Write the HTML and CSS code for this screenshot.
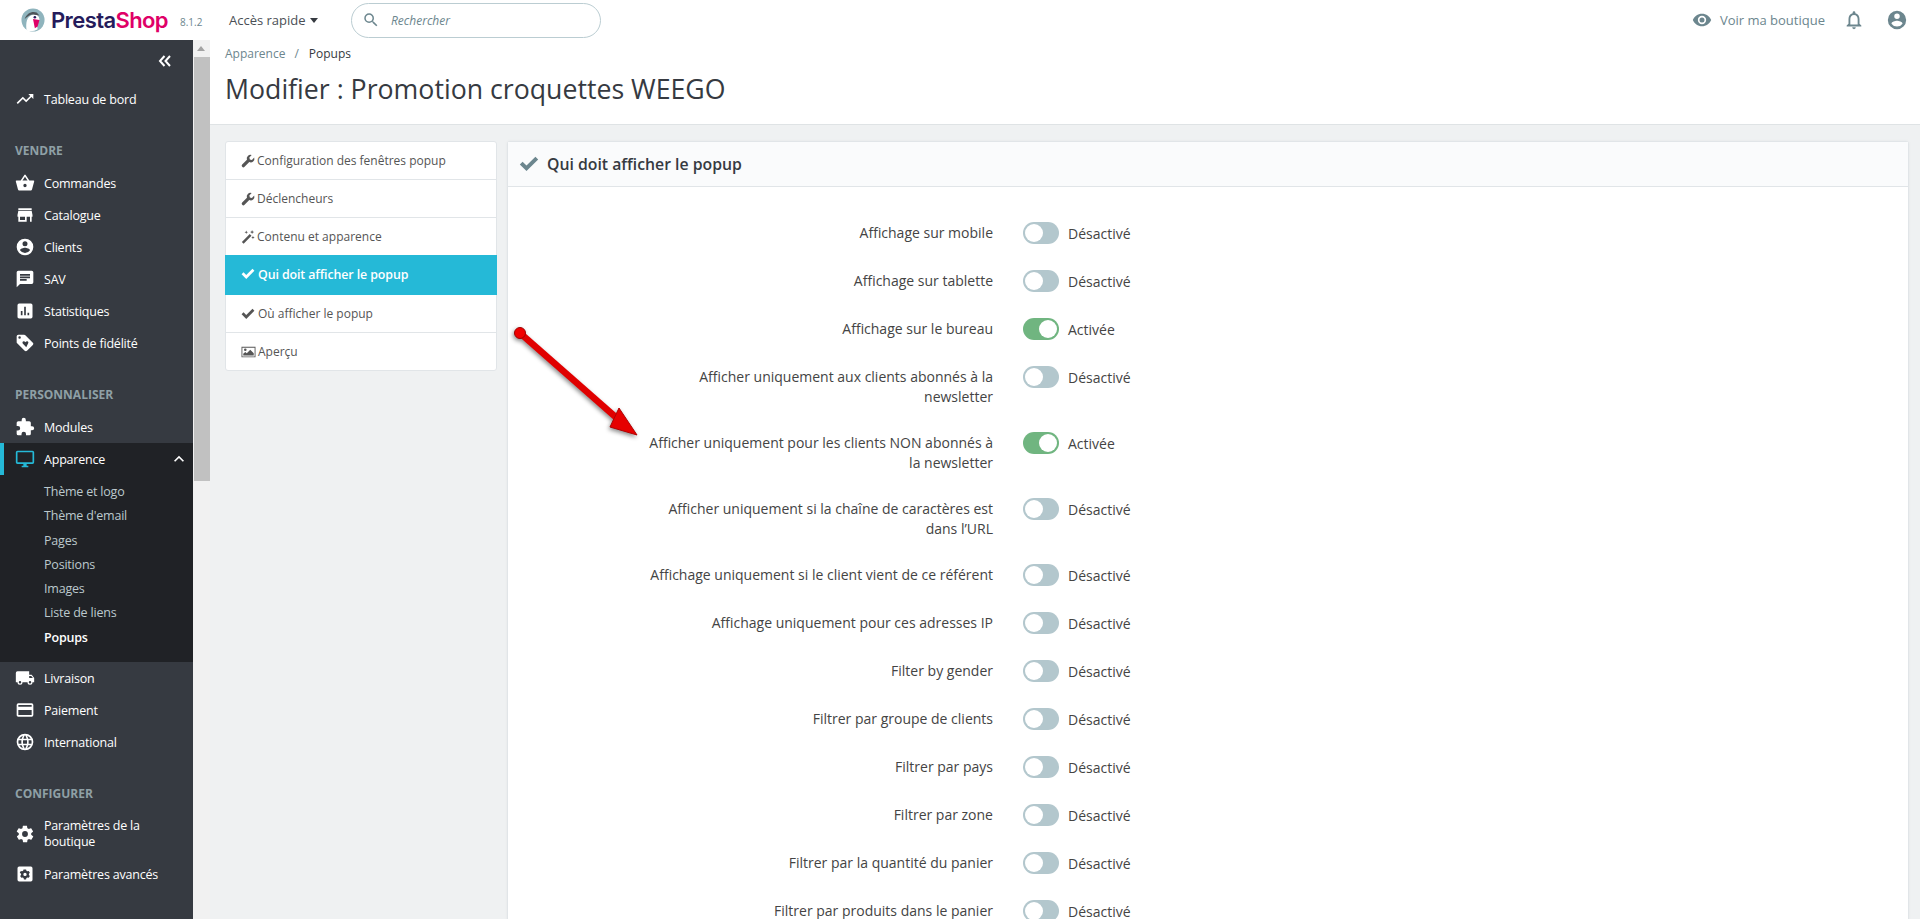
FILE: index.html
```html
<!DOCTYPE html>
<html lang="fr">
<head>
    <meta charset="UTF-8">
    <title>Modifier : Promotion croquettes WEEGO</title>
    <link rel="stylesheet" href="styles.css">
</head>
<body>

    <header class="header">
        <div class="logo">
            <svg class="logo-bird" viewBox="0 0 26 26" width="24" height="24">
                <circle cx="13" cy="13" r="12.500" fill="#8fb4bd"/>
                <path d="M6 24c-1-8 0-15 7-17 5-1 7 3 7 6l-3 3 1 7c-3 2-9 3-12 1z" fill="#fff"/>
                <path d="M4 12c2-6 8-9 13-7l3 3-7-1c-3 0-6 2-9 5z" fill="#4d5459"/>
                <path d="M13 12l7 1-2 7-3 2z" fill="#df0067"/>
                <circle cx="15" cy="10" r="1.400" fill="#251b5b"/>
            </svg>
            <span class="logo-presta">Presta</span><span class="logo-shop">Shop</span>
        </div>
        <span class="version">8.1.2</span>
        <a class="quick" href="#">Accès rapide <i class="caret"></i></a>
        <div class="search">
            <svg viewBox="0 0 24 24" width="18" height="18"><path d="M15.500 14h-.79l-.28-.27A6.470 6.470 0 0 0 16 9.500 6.500 6.500 0 1 0 9.500 16c1.610 0 3.090-.59 4.230-1.570l.27.28v.79l5 4.990L20.490 19l-4.990-5zm-6 0C7.010 14 5 11.990 5 9.500S7.010 5 9.500 5 14 7.010 14 9.500 11.990 14 9.500 14z" fill="#6c868e"/></svg>
            <span>Rechercher</span>
        </div>
        <div class="header-right">
            <a class="shop-link" href="#">
                <svg viewBox="0 0 24 24" width="20" height="20"><path d="M12 4.500C7 4.500 2.700 7.600 1 12c1.700 4.400 6 7.500 11 7.500s9.300-3.100 11-7.500c-1.700-4.400-6-7.500-11-7.500zM12 17a5 5 0 1 1 0-10 5 5 0 0 1 0 10zm0-8a3 3 0 1 0 0 6 3 3 0 0 0 0-6z" fill="#6c868e"/></svg>
                Voir ma boutique
            </a>
            <svg class="bell" viewBox="0 0 24 24" width="22" height="22"><path d="M12 22a2 2 0 0 0 2-2h-4a2 2 0 0 0 2 2zm6-6v-5c0-3.100-1.600-5.600-4.500-6.300V4a1.500 1.500 0 0 0-3 0v.7C7.600 5.400 6 7.900 6 11v5l-2 2v1h16v-1l-2-2zm-2 1H8v-6c0-2.500 1.500-4.500 4-4.500s4 2 4 4.500v6z" fill="#6c868e"/></svg>
            <svg class="account" viewBox="0 0 24 24" width="22" height="22"><path d="M12 2a10 10 0 1 0 0 20 10 10 0 0 0 0-20zm0 3a3 3 0 1 1 0 6 3 3 0 0 1 0-6zm0 14.200a7.200 7.200 0 0 1-6-3.200c0-2 4-3.100 6-3.100s6 1.100 6 3.100a7.200 7.200 0 0 1-6 3.200z" fill="#6c868e"/></svg>
        </div>
    </header>

    <div class="layout">
        <nav class="sidebar">
            <div class="collapse">
                <svg viewBox="0 0 14 12" width="14" height="12"><path d="M6.500 1L2 6l4.500 5M12 1L7.500 6l4.500 5" fill="none" stroke="#fff" stroke-width="2"/></svg>
            </div>
            <a class="nav-item first" href="#">
                <svg viewBox="0 0 24 24"><path d="M16 6l2.300 2.300-4.900 4.900-4-4L2 16.600 3.400 18l6-6 4 4 6.300-6.300L22 12V6z"/></svg>
                Tableau de bord
            </a>

            <div class="nav-title">VENDRE</div>
            <a class="nav-item" href="#">
                <svg viewBox="0 0 24 24"><path d="M17.200 9l-4.400-6.600a1 1 0 0 0-1.600 0L6.800 9H2a1 1 0 0 0-1 1.300l2.500 9.200c.2.900 1 1.500 1.900 1.500h13.200c.9 0 1.700-.6 1.900-1.500l2.500-9.200A1 1 0 0 0 22 9h-4.800zM9 9l3-4.400L15 9H9zm3 8a2 2 0 1 1 0-4 2 2 0 0 1 0 4z"/></svg>
                Commandes
            </a>
            <a class="nav-item" href="#">
                <svg viewBox="0 0 24 24"><path d="M20 4H4v2h16V4zm1 10v-2l-1-5H4l-1 5v2h1v6h10v-6h4v6h2v-6h1zm-9 4H6v-4h6v4z"/></svg>
                Catalogue
            </a>
            <a class="nav-item" href="#">
                <svg viewBox="0 0 24 24"><path d="M12 2a10 10 0 1 0 0 20 10 10 0 0 0 0-20zm0 3a3 3 0 1 1 0 6 3 3 0 0 1 0-6zm0 14.200a7.200 7.200 0 0 1-6-3.200c0-2 4-3.100 6-3.100s6 1.100 6 3.100a7.200 7.200 0 0 1-6 3.200z"/></svg>
                Clients
            </a>
            <a class="nav-item" href="#">
                <svg viewBox="0 0 24 24"><path d="M20 2H4a2 2 0 0 0-2 2v18l4-4h14a2 2 0 0 0 2-2V4a2 2 0 0 0-2-2zM6 9h12v2H6V9zm8 5H6v-2h8v2zm4-6H6V6h12v2z"/></svg>
                SAV
            </a>
            <a class="nav-item" href="#">
                <svg viewBox="0 0 24 24"><path d="M19 3H5a2 2 0 0 0-2 2v14c0 1.100.9 2 2 2h14a2 2 0 0 0 2-2V5a2 2 0 0 0-2-2zM9 17H7v-5h2v5zm4 0h-2V7h2v10zm4 0h-2v-3h2v3z"/></svg>
                Statistiques
            </a>
            <a class="nav-item" href="#">
                <svg viewBox="0 0 24 24"><path d="M21.400 11.600l-9-9C12 2.200 11.500 2 11 2H4a2 2 0 0 0-2 2v7c0 .6.200 1.100.6 1.400l9 9c.4.400.9.600 1.400.600s1.100-.2 1.400-.6l7-7c.4-.4.600-.9.600-1.400s-.2-1-.6-1.400zM5.500 7a1.500 1.500 0 1 1 0-3 1.500 1.500 0 0 1 0 3zm8 10l-4-4c-.9-1-.7-3 1-3 .8 0 1.500.5 2 1.100.5-.6 1.200-1.100 2-1.100 1.700 0 2 2 1 3z"/></svg>
                Points de fidélité
            </a>

            <div class="nav-title">PERSONNALISER</div>
            <a class="nav-item" href="#">
                <svg viewBox="0 0 24 24"><path d="M20.500 11H19V7a2 2 0 0 0-2-2h-4V3.500a2.500 2.500 0 0 0-5 0V5H4a2 2 0 0 0-2 2v3.800h1.500a2.700 2.700 0 0 1 0 5.400H2V20a2 2 0 0 0 2 2h3.800v-1.500a2.700 2.700 0 0 1 5.400 0V22H17a2 2 0 0 0 2-2v-4h1.500a2.500 2.500 0 0 0 0-5z"/></svg>
                Modules
            </a>
            <div class="nav-open">
                <a class="nav-item active" href="#">
                    <svg viewBox="0 0 24 24"><path d="M21 2H3a2 2 0 0 0-2 2v12c0 1.100.9 2 2 2h7v2H8v2h8v-2h-2v-2h7a2 2 0 0 0 2-2V4a2 2 0 0 0-2-2zm0 14H3V4h18v12z"/></svg>
                    Apparence
                    <svg class="chevron" viewBox="0 0 24 24"><path d="M12 8l-6 6 1.400 1.400 4.600-4.600 4.600 4.600L18 14z"/></svg>
                </a>
                <ul class="subnav">
                    <li>Thème et logo</li>
                    <li>Thème d'email</li>
                    <li>Pages</li>
                    <li>Positions</li>
                    <li>Images</li>
                    <li>Liste de liens</li>
                    <li class="current">Popups</li>
                </ul>
            </div>
            <a class="nav-item" href="#">
                <svg viewBox="0 0 24 24"><path d="M20 8h-3V4H3a2 2 0 0 0-2 2v11h2a3 3 0 0 0 6 0h6a3 3 0 0 0 6 0h2v-5l-3-4zM6 18.500a1.500 1.500 0 1 1 0-3 1.500 1.500 0 0 1 0 3zm12 0a1.500 1.500 0 1 1 0-3 1.500 1.500 0 0 1 0 3zM17 12V9.500h2.500l2 2.500H17z"/></svg>
                Livraison
            </a>
            <a class="nav-item" href="#">
                <svg viewBox="0 0 24 24"><path d="M20 4H4a2 2 0 0 0-2 2v12c0 1.100.9 2 2 2h16a2 2 0 0 0 2-2V6a2 2 0 0 0-2-2zm0 14H4v-6h16v6zm0-10H4V6h16v2z"/></svg>
                Paiement
            </a>
            <a class="nav-item" href="#">
                <svg viewBox="0 0 24 24"><path d="M12 2a10 10 0 1 0 0 20 10 10 0 0 0 0-20zm6.900 6h-3a15.700 15.700 0 0 0-1.400-3.600A8 8 0 0 1 18.900 8zM12 4c.8 1.200 1.500 2.500 1.900 4h-3.800c.4-1.500 1.100-2.800 1.900-4zM4.300 14a8.300 8.300 0 0 1 0-4h3.400a16.500 16.500 0 0 0 0 4H4.300zm.8 2h3c.3 1.300.8 2.500 1.400 3.600A8 8 0 0 1 5.100 16zm3-8h-3a8 8 0 0 1 4.400-3.600C8.900 5.500 8.400 6.700 8.100 8zM12 20c-.8-1.200-1.500-2.500-1.900-4h3.800c-.4 1.500-1.100 2.800-1.900 4zm2.300-6H9.700a14.700 14.700 0 0 1 0-4h4.700a14.700 14.700 0 0 1-.1 4zm.2 5.600c.6-1.100 1.100-2.300 1.400-3.600h3a8 8 0 0 1-4.400 3.600zm1.800-5.600a16.500 16.500 0 0 0 0-4h3.400a8.300 8.300 0 0 1 0 4h-3.400z"/></svg>
                International
            </a>

            <div class="nav-title">CONFIGURER</div>
            <a class="nav-item two-line" href="#">
                <svg viewBox="0 0 24 24"><path d="M19.400 13l.1-1-.1-1 2.100-1.600c.2-.2.200-.4.100-.6l-2-3.500c-.1-.2-.4-.3-.6-.2l-2.500 1a7.300 7.300 0 0 0-1.700-1l-.4-2.700c0-.2-.2-.4-.5-.4h-4c-.2 0-.4.200-.5.400l-.4 2.700c-.6.200-1.200.6-1.700 1l-2.500-1c-.2-.1-.5 0-.6.200l-2 3.500c-.1.200-.1.400.1.600L4.600 11l-.1 1 .1 1-2.100 1.600c-.2.200-.2.400-.1.600l2 3.500c.1.200.4.300.6.200l2.500-1c.5.400 1.100.8 1.700 1l.4 2.700c.1.200.3.400.5.400h4c.3 0 .5-.2.500-.4l.4-2.700c.6-.2 1.200-.6 1.700-1l2.500 1c.2.100.5 0 .6-.2l2-3.500c.1-.2.100-.4-.1-.6L19.400 13zM12 15.500a3.500 3.500 0 1 1 0-7 3.500 3.500 0 0 1 0 7z"/></svg>
                <span>Paramètres de la boutique</span>
            </a>
            <a class="nav-item" href="#">
                <svg viewBox="0 0 24 24"><path fill-rule="evenodd" d="M19 3H5a2 2 0 0 0-2 2v14a2 2 0 0 0 2 2h14a2 2 0 0 0 2-2V5a2 2 0 0 0-2-2zM13.300 6.500l.4 1.600 1.300.7 1.500-.4 1.300 2.200-1.100 1.200v1.400l1.100 1.200-1.300 2.200-1.500-.4-1.300.7-.4 1.600h-2.600l-.4-1.600-1.300-.7-1.500.4-1.300-2.200 1.100-1.200v-1.400L5.700 10.600 7 8.400l1.500.4 1.300-.7.4-1.600zM12 10.500a2 2 0 1 0 0 4 2 2 0 0 0 0-4z"/></svg>
                Paramètres avancés
            </a>
        </nav>

        <div class="scrollbar"><div class="scroll-up"></div><div class="scroll-thumb"></div></div>

        <main class="content">
            <div class="page-head">
                <div class="breadcrumb"><span>Apparence</span><em>/</em><b>Popups</b></div>
                <h1>Modifier : Promotion croquettes WEEGO</h1>
            </div>

            <div class="page-body">
                <aside class="tabs">
                    <a class="tab" href="#">
                        <svg viewBox="0 0 24 24"><path d="M22.700 6.200l-4 4-3.500-.9-.9-3.500 4-4a6.300 6.300 0 0 0-8.100 8L2 17.900a2.900 2.900 0 0 0 4.100 4.100l8.100-8.200a6.300 6.300 0 0 0 8.500-7.600z"/></svg>
                        Configuration des fenêtres popup
                    </a>
                    <a class="tab" href="#">
                        <svg viewBox="0 0 24 24"><path d="M22.700 6.200l-4 4-3.500-.9-.9-3.500 4-4a6.300 6.300 0 0 0-8.100 8L2 17.900a2.900 2.900 0 0 0 4.100 4.100l8.100-8.200a6.300 6.300 0 0 0 8.500-7.600z"/></svg>
                        Déclencheurs
                    </a>
                    <a class="tab" href="#">
                        <svg viewBox="0 0 24 24"><path d="M1.500 20.500L15 7l3 3L4.500 23.500zM19 0l1 2.500L22.500 3.500 20 4.500l-1 2.500-1-2.500-2.500-1L18 2.500zM9 1l.8 2.200L12 4l-2.200.8L9 7l-.8-2.200L6 4l2.200-.8zM20.500 10l.8 2.200 2.200.8-2.200.8-.8 2.200-.8-2.200-2.200-.8 2.200-.8z"/></svg>
                        Contenu et apparence
                    </a>
                    <a class="tab tab-active" href="#">
                        <svg viewBox="0 0 24 24"><path d="M9 20.500L1 12.500 4.300 9.200 9 13.900 19.700 3.200 23 6.500z"/></svg>
                        Qui doit afficher le popup
                    </a>
                    <a class="tab tab-check" href="#">
                        <svg viewBox="0 0 24 24"><path d="M9 20.500L1 12.500 4.300 9.200 9 13.900 19.700 3.200 23 6.500z"/></svg>
                        Où afficher le popup
                    </a>
                    <a class="tab tab-image" href="#">
                        <svg viewBox="0 0 24 24"><path fill-rule="evenodd" d="M0 3h24v18H0V3zm1.500 1.500v15h21v-15h-21zM6.500 6a2.200 2.200 0 1 1 0 4.400 2.200 2.200 0 0 1 0-4.400zM3 18v-3l3.500-3 2.500 2 6-6 6 6v4H3z"/></svg>
                        Aperçu
                    </a>
                </aside>

                <section class="panel">
                    <div class="panel-heading">
                        <svg viewBox="0 0 24 24" width="20" height="20"><path d="M9 20.500L1 12.500 4.300 9.200 9 13.900 19.700 3.200 23 6.500z" fill="#6c868e"/></svg>
                        Qui doit afficher le popup
                    </div>
                    <div class="panel-body">
                        <div class="row"><label>Affichage sur mobile</label><span class="switch"></span><span class="state">Désactivé</span></div>
                        <div class="row"><label>Affichage sur tablette</label><span class="switch"></span><span class="state">Désactivé</span></div>
                        <div class="row"><label>Affichage sur le bureau</label><span class="switch on"></span><span class="state">Activée</span></div>
                        <div class="row"><label>Afficher uniquement aux clients abonnés à la newsletter</label><span class="switch"></span><span class="state">Désactivé</span></div>
                        <div class="row"><label>Afficher uniquement pour les clients NON abonnés à la newsletter</label><span class="switch on"></span><span class="state">Activée</span></div>
                        <div class="row"><label>Afficher uniquement si la chaîne de caractères est dans l’URL</label><span class="switch"></span><span class="state">Désactivé</span></div>
                        <div class="row"><label>Affichage uniquement si le client vient de ce référent</label><span class="switch"></span><span class="state">Désactivé</span></div>
                        <div class="row"><label>Affichage uniquement pour ces adresses IP</label><span class="switch"></span><span class="state">Désactivé</span></div>
                        <div class="row"><label>Filter by gender</label><span class="switch"></span><span class="state">Désactivé</span></div>
                        <div class="row"><label>Filtrer par groupe de clients</label><span class="switch"></span><span class="state">Désactivé</span></div>
                        <div class="row"><label>Filtrer par pays</label><span class="switch"></span><span class="state">Désactivé</span></div>
                        <div class="row"><label>Filtrer par zone</label><span class="switch"></span><span class="state">Désactivé</span></div>
                        <div class="row"><label>Filtrer par la quantité du panier</label><span class="switch"></span><span class="state">Désactivé</span></div>
                        <div class="row"><label>Filtrer par produits dans le panier</label><span class="switch"></span><span class="state">Désactivé</span></div>
                    </div>
                </section>
            </div>

            <svg class="arrow" viewBox="0 0 130 120" width="130" height="120">
                <line x1="7" y1="11" x2="106" y2="98" stroke="#e00000" stroke-width="6.500"/>
                <polygon points="106,86 97,105 124,113" fill="#e60000" stroke="#b00000" stroke-width="1"/>
                <circle cx="7" cy="11" r="5.500" fill="#f00000" stroke="#a00000" stroke-width="1"/>
            </svg>
        </main>
    </div>

</body>
</html>
```

FILE: styles.css
```css
:root {
    --dark: #363a41;
    --darker: #202226;
    --cyan: #25b9d7;
    --muted: #6c868e;
    --text: #363a41;
    --page-bg: #eff1f2;
    --border: #e1e5e8;
}

* { box-sizing: border-box; }

html, body { height: 100%; }

body {
    margin: 0;
    height: 919px;
    overflow: hidden;
    font-family: "Open Sans", "Liberation Sans", sans-serif;
    font-size: 13px;
    color: var(--text);
    background-color: var(--page-bg);
}

a { text-decoration: none; color: inherit; }

/* top bar */
.header {
    height: 40px;
    background-color: #fff;
    display: flex;
    align-items: center;
    padding-left: 21px;
}
.logo { display: flex; align-items: center; font-family: Inter, "Open Sans", sans-serif; font-size: 22px; font-weight: 600; letter-spacing: -0.6px; width: 148px; flex-shrink: 0; }
.logo-bird { margin-right: 6px; flex-shrink: 0; }
.logo-presta { color: #251b5b; }
.logo-shop { color: #df0067; }
.version { font-size: 10px; color: #6c868e; margin-left: 11px; width: 49px; padding-top: 3px; flex-shrink: 0; }
.quick { font-size: 13px; color: #4a4f55; width: 122px; display: flex; align-items: center; gap: 4px; flex-shrink: 0; }
.caret { display: inline-block; border-top: 5px solid #363a41; border-left: 4px solid transparent; border-right: 4px solid transparent; }
.search {
    width: 250px; height: 35px;
    border: 1px solid #bbcdd2; border-radius: 18px;
    display: flex; align-items: center; gap: 11px; padding-left: 10px;
    font-size: 12px; font-style: italic; color: #6c868e;
}
.header-right { margin-left: auto; display: flex; align-items: center; padding-right: 12px; }
.shop-link { display: flex; align-items: center; gap: 8px; color: #6c868e; font-size: 13px; }
.bell { margin-left: 18px; }
.account { margin-left: 21px; }

.layout { display: flex; height: 879px; position: relative; }

/* side nav */
.sidebar { width: 193px; flex-shrink: 0; background-color: var(--dark); color: #fff; }
.collapse { height: 30px; display: flex; justify-content: flex-end; padding: 15px 21px 0 0; }
.nav-item { display: flex; align-items: center; height: 32px; padding-left: 15px; gap: 9px; font-size: 12.500px; color: #fff; letter-spacing: -0.2px; }
.nav-item svg { width: 20px; height: 20px; fill: #fff; flex-shrink: 0; }
.nav-item.first { margin-top: 13px; }
.nav-item.two-line { height: 48px; }
.nav-item.two-line span { line-height: 16px; width: 125px; }
.nav-title { margin: 27px 0 7px 15px; font-size: 12px; font-weight: 700; color: #8fa0a6; height: 18px; line-height: 18px; }
.nav-open { background-color: var(--darker); padding-bottom: 12px; }
.nav-item.active { position: relative; border-left: 4px solid var(--cyan); padding-left: 11px; }
.nav-item.active svg { fill: var(--cyan); }
.nav-item.active .chevron { fill: #fff; margin-left: auto; margin-right: 4px; }
.subnav { list-style: none; margin: 0; padding: 5px 0 0 44px; color: #bcc9cd; font-size: 12.500px; }
.subnav li { height: 24.300px; line-height: 24.300px; letter-spacing: -0.2px; }
.subnav li.current { color: #fff; font-weight: 600; }

/* fake browser scrollbar of the side nav */
.scrollbar { width: 17px; flex-shrink: 0; background-color: #f1f1f1; }
.scroll-up { height: 17px; position: relative; }
.scroll-up::after {
    content: ""; position: absolute; left: 4px; top: 6px;
    border-bottom: 5px solid #a3a3a3; border-left: 4px solid transparent; border-right: 4px solid transparent;
}
.scroll-thumb { height: 424px; background-color: #c1c1c1; margin-left: 1px; }

.content { flex: 1; min-width: 0; position: relative; }

.page-head { height: 85px; background-color: #fff; border-bottom: 1px solid #dfe3e5; padding: 6px 15px 0; }
.breadcrumb { font-size: 12px; line-height: 16px; color: #6c868e; }
.breadcrumb em { font-style: normal; margin: 0 10px 0 9px; }
.breadcrumb b { font-weight: 400; color: #363a41; }
h1 { margin: 8px 0 0; font-size: 26.700px; font-weight: 400; line-height: 38px; color: #363a41; }

.page-body { display: flex; align-items: flex-start; gap: 10px; padding: 16px 11px 0 15px; }

.tabs {
    width: 272px; flex-shrink: 0;
    background-color: #fff; border: 1px solid var(--border); border-radius: 3px;
}
.tab { display: flex; align-items: center; gap: 2px; height: 38px; padding-left: 15px; border-bottom: 1px solid var(--border); font-size: 12px; color: #555; }
.tab:nth-child(3) { height: 37px; border-bottom: 0; }
.tab:last-child { height: 37px; border-bottom: 0; }
.tab svg { width: 14px; height: 14px; fill: #555; flex-shrink: 0; }
.tab-active { background-color: var(--cyan); color: #fff; margin: 0 -1px; height: 40px; padding: 0 0 2px 16px; border-bottom: 0; font-size: 12.400px; font-weight: 600; letter-spacing: -0.1px; gap: 3px; }
.tab-active svg { fill: #fff; }
.tab-check { gap: 3px; }
.tab-image svg { width: 15px; }

.panel { flex: 1; min-width: 0; background-color: #fff; border: 1px solid var(--border); border-radius: 3px 3px 0 0; box-shadow: 0 0 3px rgba(0,0,0,.05); }
.panel-heading {
    height: 45px; background-color: #fafbfc; border-bottom: 1px solid var(--border);
    display: flex; align-items: center; gap: 8px; padding-left: 11px;
    font-size: 15.800px; font-weight: 600; color: #363a41;
}
.panel-body { padding-top: 32px; }

.row { display: flex; align-items: flex-start; margin-bottom: 19px; min-height: 29px; }
.row label { width: 485px; flex-shrink: 0; text-align: right; padding: 4px 0 3px 135px; line-height: 20px; font-size: 14px; color: #444; }
.switch {
    position: relative; width: 36px; height: 22px; margin: 3px 0 0 30px; flex-shrink: 0;
    border-radius: 11px; background-color: #b3c7cd;
}
.switch::after {
    content: ""; position: absolute; left: 2px; top: 2px;
    width: 18px; height: 18px; border-radius: 50%; background-color: #fff;
}
.switch.on { background-color: #70b580; }
.switch.on::after { left: 16px; }
.state { margin-left: 9px; font-size: 14px; line-height: 20px; padding-top: 5px; color: #444; }

/* annotation drawn over the screenshot */
.arrow { position: absolute; left: 303px; top: 282px; filter: drop-shadow(-1px 2px 2px rgba(0,0,0,.45)); }
```
